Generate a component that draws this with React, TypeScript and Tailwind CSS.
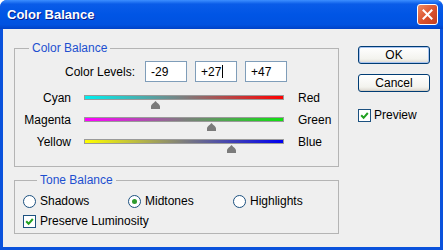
import type { ReactNode } from "react"

type SliderProps = {
  left: string
  right: string
  value: number
  gradient: string
}

function Thumb({ value }: { value: number }) {
  const pct = (value + 100) / 2
  return (
    <svg
      viewBox="0 0 9 8"
      className="absolute top-[6px] -ml-[4.5px] h-[8px] w-[9px]"
      style={{ left: `${pct}%` }}
      aria-hidden
    >
      <path
        d="M4.5 0 C5.6 1.6 9 3.4 9 5.6 L9 8 L0 8 L0 5.6 C0 3.4 3.4 1.6 4.5 0 Z"
        fill="#7b7b7b"
      />
    </svg>
  )
}

function SliderRow({ left, right, value, gradient }: SliderProps) {
  return (
    <div className="flex h-[22px] items-start">
      <span className="w-[56px] text-right leading-[14px]">{left}</span>
      <div className="relative ml-[13px] mt-[4px] h-[5px] w-[200px]">
        <div className={`h-[5px] w-full border border-[#9a9a9a] ${gradient}`} />
        <Thumb value={value} />
      </div>
      <span className="ml-[14px] leading-[14px]">{right}</span>
    </div>
  )
}

function CheckBox() {
  return (
    <span className="flex h-[13px] w-[13px] shrink-0 items-center justify-center border border-[#1c5180] bg-white">
      <svg viewBox="0 0 9 9" className="h-[9px] w-[9px]" aria-hidden>
        <path d="M1.2 4.3 L3.6 6.8 L7.8 2" stroke="#21a121" strokeWidth="2" fill="none" />
      </svg>
    </span>
  )
}

function Radio({ label, checked }: { label: string; checked?: boolean }) {
  return (
    <div className="flex w-[105px] items-center gap-[4px]">
      <span className="flex h-[13px] w-[13px] shrink-0 items-center justify-center rounded-full border border-[#1c5180] bg-white">
        {checked && <span className="h-[5px] w-[5px] rounded-full bg-[#2d9a2d]" />}
      </span>
      <span className="leading-[14px]">{label}</span>
    </div>
  )
}

function LevelBox({ children, caret }: { children: ReactNode; caret?: boolean }) {
  return (
    <div className="flex h-[21px] w-[42px] items-center border border-[#7f9db9] bg-white pl-[5px]">
      <span className="leading-[14px]">{children}</span>
      {caret && <span className="ml-[1px] h-[13px] w-px bg-black" />}
    </div>
  )
}

function GroupBox({ title, className, children }: { title: string; className?: string; children: ReactNode }) {
  return (
    <fieldset className={`border border-[#b4b4b4] ${className ?? ""}`}>
      <legend className="ml-[14px] px-[3px] leading-[14px] text-[#1d4fd0]">{title}</legend>
      {children}
    </fieldset>
  )
}

function XpButton({ children, focused }: { children: ReactNode; focused?: boolean }) {
  return (
    <button
      className={`flex h-[18px] w-[72px] items-center justify-center rounded-[3px] border border-[#003c74] bg-[linear-gradient(to_bottom,#ffffff,#f3f3ee_75%,#dcd8cf)] leading-none ${
        focused ? "shadow-[inset_0_0_0_1px_#a9c4f0]" : "shadow-[inset_0_-1px_0_#d6d0c5]"
      }`}
    >
      {children}
    </button>
  )
}

export default function App() {
  return (
    <div className="flex h-[250px] w-[443px] flex-col rounded-t-[7px] bg-[#0a52dc] font-['Liberation_Sans',Arial,sans-serif] text-[12px] text-black">
      <div className="flex h-[29px] shrink-0 items-center justify-between rounded-t-[7px] bg-[linear-gradient(to_bottom,#3d8fff_0%,#0a5ce8_14%,#0055e5_50%,#0052e0_85%,#0042c8_100%)] pl-[7px] pr-[5px]">
        <span className="text-[13px] font-bold text-white [text-shadow:1px_1px_#0a1d8a]">
          Color Balance
        </span>
        <div className="flex h-[21px] w-[21px] items-center justify-center rounded-[3px] border border-white bg-[linear-gradient(135deg,#f08a62,#d9502c_55%,#c13d20)]">
          <svg viewBox="0 0 11 11" className="h-[11px] w-[11px]" aria-hidden>
            <path d="M1.5 1.5 L9.5 9.5 M9.5 1.5 L1.5 9.5" stroke="#fff" strokeWidth="2" strokeLinecap="square" />
          </svg>
        </div>
      </div>

      <div className="mx-[3px] mb-[3px] flex flex-1 bg-[#efefef]">
        <div className="ml-[11px] mt-[12px] flex w-[325px] flex-col">
          <GroupBox title="Color Balance" className="pb-[9px]">
            <div className="mt-[6px] flex h-[21px] items-center">
              <span className="w-[120px] text-right leading-[14px]">Color Levels:</span>
              <div className="ml-[10px] flex gap-2">
                <LevelBox>-29</LevelBox>
                <LevelBox caret>+27</LevelBox>
                <LevelBox>+47</LevelBox>
              </div>
            </div>
            <div className="mt-[9px] flex flex-col">
              <SliderRow
                left="Cyan"
                right="Red"
                value={-29}
                gradient="bg-[linear-gradient(to_right,#00f0f0,#7d7d7d,#ff0000)]"
              />
              <SliderRow
                left="Magenta"
                right="Green"
                value={27}
                gradient="bg-[linear-gradient(to_right,#ff00ff,#7d7d7d,#10e010)]"
              />
              <SliderRow
                left="Yellow"
                right="Blue"
                value={47}
                gradient="bg-[linear-gradient(to_right,#ffff00,#7d7d7d,#0000f0)]"
              />
            </div>
          </GroupBox>

          <GroupBox title="Tone Balance" className="mt-[6px] pb-[5px] pl-[8px]">
            <div className="mt-[7px] flex h-[14px] items-center">
              <Radio label="Shadows" />
              <Radio label="Midtones" checked />
              <Radio label="Highlights" />
            </div>
            <div className="mt-[6px] flex h-[14px] items-center gap-[4px]">
              <CheckBox />
              <span className="leading-[14px]">Preserve Luminosity</span>
            </div>
          </GroupBox>
        </div>

        <div className="ml-[19px] mt-[17px] flex flex-col">
          <XpButton focused>OK</XpButton>
          <div className="mt-[10px]">
            <XpButton>Cancel</XpButton>
          </div>
          <div className="mt-[16px] flex h-[14px] items-center gap-[3px]">
            <CheckBox />
            <span className="leading-[14px]">Preview</span>
          </div>
        </div>
      </div>
    </div>
  )
}
